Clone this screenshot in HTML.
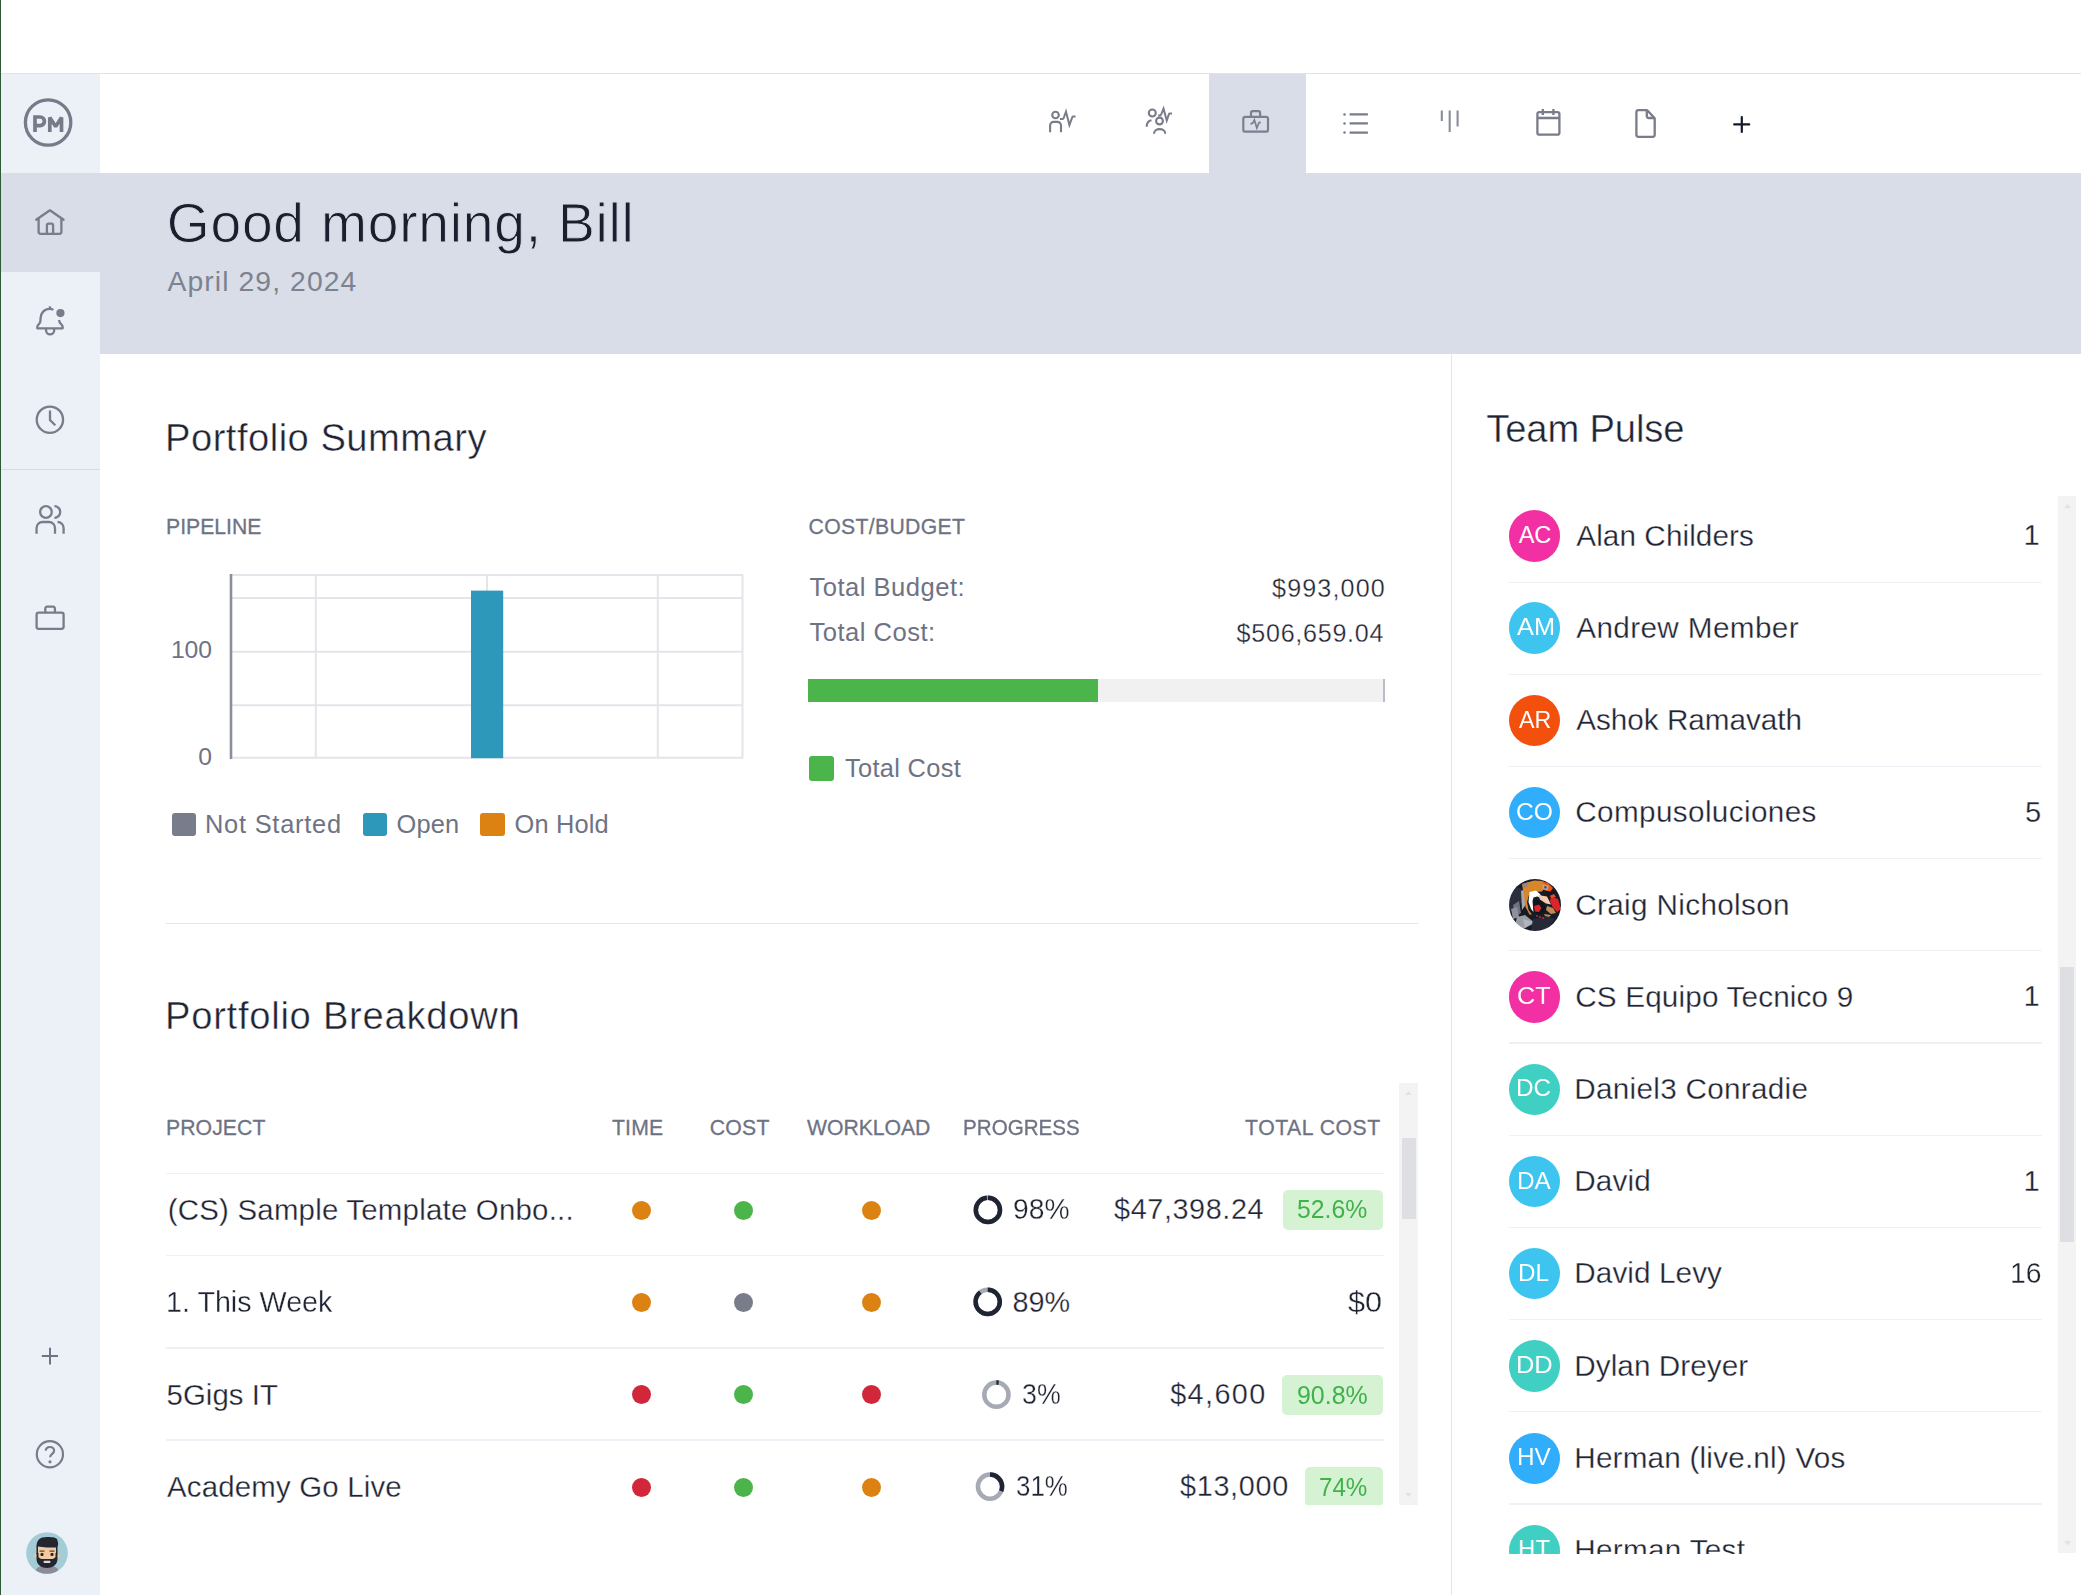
<!DOCTYPE html>
<html>
<head>
<meta charset="utf-8">
<title>Dashboard</title>
<style>
html,body{margin:0;padding:0;}
body{width:2081px;height:1595px;overflow:hidden;background:#fff;position:relative;font-family:"Liberation Sans",sans-serif;color:#1f2433;}
.abs{position:absolute;}
.t{position:absolute;white-space:nowrap;line-height:1;}
svg{position:absolute;overflow:visible;}
.ic{fill:none;stroke:#7a7e8d;stroke-width:2.6;stroke-linecap:round;stroke-linejoin:round;}
.dot{position:absolute;width:19px;height:19px;border-radius:50%;}
.o{background:#dc8213;}.g{background:#4bb54b;}.r{background:#d2263a;}.y{background:#787c8b;}
.badge{position:absolute;background:#d5f2d3;border-radius:5px;}
.av{position:absolute;width:51.4px;height:51.4px;border-radius:50%;}
.hl{position:absolute;height:2px;background:#eef1f6;}
</style>
</head>
<body>
<!-- window chrome -->
<div class="abs" style="left:0;top:72.8px;width:2081px;height:1.2px;background:#e2e3e8;"></div>
<!-- sidebar -->
<div class="abs" style="left:0;top:74px;width:100px;height:1521px;background:#ecf0f7;"></div>
<div class="abs" style="left:0;top:173px;width:100px;height:99px;background:#d8dde8;"></div>
<div class="abs" style="left:0;top:468.9px;width:100px;height:1.2px;background:#d5dae7;"></div>
<div class="abs" style="left:0;top:0;width:1.3px;height:1595px;background:#2f5a38;"></div>
<!-- top nav active tab -->
<div class="abs" style="left:1209px;top:74px;width:97px;height:99px;background:#d8dde8;"></div>
<!-- header band -->
<div class="abs" style="left:100px;top:173px;width:1981px;height:181px;background:#d8dde8;"></div>
<!-- divider between main & team pulse -->
<div class="abs" style="left:1450.8px;top:354px;width:1.4px;height:1241px;background:#e1e6ee;"></div>
<div class="t" id="t_hello" style="left:166.75px;top:196.26px;font-size:55.2px;letter-spacing:0.77px;color:#1a1f2e;-webkit-text-stroke:0.9px #d8dde8;">Good morning, Bill</div>
<div class="t" id="t_date" style="left:167.5px;top:266.79px;font-size:28.3px;letter-spacing:1.09px;color:#7d8290;">April 29, 2024</div>
<div class="t" id="t_ps" style="left:165px;top:418.91px;font-size:38.2px;letter-spacing:0.47px;color:#1f2433;-webkit-text-stroke:0.45px #fff;">Portfolio Summary</div>
<div class="t" id="t_pb" style="left:165px;top:996.91px;font-size:38.2px;letter-spacing:0.72px;color:#1f2433;-webkit-text-stroke:0.45px #fff;">Portfolio Breakdown</div>
<div class="t" id="t_tp" style="left:1486.25px;top:410.16px;font-size:38.2px;letter-spacing:-0.14px;color:#1f2433;-webkit-text-stroke:0.45px #fff;">Team Pulse</div>
<div class="t" id="t_pipe" style="left:166px;top:515.55px;font-size:21.2px;letter-spacing:-0.0px;color:#6e7384;-webkit-text-stroke:0.3px #6e7384;">PIPELINE</div>
<div class="t" id="t_cb" style="left:808.5px;top:515.55px;font-size:21.2px;letter-spacing:0.34px;color:#6e7384;-webkit-text-stroke:0.3px #6e7384;">COST/BUDGET</div>
<div class="t" id="t_100" style="left:171px;top:638.34px;font-size:24.7px;letter-spacing:-0.11px;color:#6e7384;">100</div>
<div class="t" id="t_0" style="left:198.25px;top:744.84px;font-size:24.7px;letter-spacing:0px;color:#6e7384;">0</div>
<div class="t" id="t_ns" style="left:205px;top:811.74px;font-size:25.4px;letter-spacing:0.77px;color:#6e7384;">Not Started</div>
<div class="t" id="t_open" style="left:396.5px;top:811.74px;font-size:25.4px;letter-spacing:0.17px;color:#6e7384;">Open</div>
<div class="t" id="t_oh" style="left:514.5px;top:811.74px;font-size:25.4px;letter-spacing:0.16px;color:#6e7384;">On Hold</div>
<div class="t" id="t_tb" style="left:809.5px;top:575.32px;font-size:25.6px;letter-spacing:0.48px;color:#6e7384;">Total Budget:</div>
<div class="t" id="t_tc" style="left:809.5px;top:620.32px;font-size:25.6px;letter-spacing:0.47px;color:#6e7384;">Total Cost:</div>
<div class="t" id="t_tbv" style="left:1272.1px;top:575.75px;font-size:25.1px;letter-spacing:1.13px;color:#1f2433;-webkit-text-stroke:0.3px #fff;">$993,000</div>
<div class="t" id="t_tcv" style="left:1236.6px;top:620.75px;font-size:25.1px;letter-spacing:0.73px;color:#1f2433;-webkit-text-stroke:0.3px #fff;">$506,659.04</div>
<div class="t" id="t_tcl" style="left:845px;top:755.99px;font-size:25.4px;letter-spacing:0.32px;color:#6e7384;">Total Cost</div>

<svg style="left:0;top:0;" width="2081" height="1595" viewBox="0 0 2081 1595">
 <g stroke="#e3e5ea" stroke-width="2" fill="none">
  <line x1="231" y1="575" x2="743" y2="575"/>
  <line x1="231" y1="598" x2="743" y2="598"/>
  <line x1="231" y1="651.7" x2="743" y2="651.7"/>
  <line x1="231" y1="705.2" x2="743" y2="705.2"/>
  <line x1="231" y1="757.8" x2="743" y2="757.8"/>
  <line x1="315.8" y1="575" x2="315.8" y2="758"/>
  <line x1="487" y1="575" x2="487" y2="758"/>
  <line x1="657.8" y1="575" x2="657.8" y2="758"/>
  <line x1="742.5" y1="575" x2="742.5" y2="758"/>
 </g>
 <rect x="471" y="590.6" width="32.2" height="167.6" fill="#2d98b9"/>
 <line x1="231" y1="574" x2="231" y2="759" stroke="#8a8e9b" stroke-width="2.6"/>
</svg>
<div class="abs" style="left:171.5px;top:812.5px;width:24px;height:23.5px;border-radius:3px;background:#787c8b;"></div>
<div class="abs" style="left:362.8px;top:812.5px;width:24px;height:23.5px;border-radius:3px;background:#2d98b9;"></div>
<div class="abs" style="left:480px;top:812.5px;width:25px;height:23.5px;border-radius:3px;background:#dc8213;"></div>
<div class="abs" style="left:807.5px;top:679.3px;width:577.5px;height:22.7px;background:#f1f1f2;"></div>
<div class="abs" style="left:807.5px;top:679.3px;width:290.5px;height:22.7px;background:#4bb54b;"></div>
<div class="abs" style="left:1383.3px;top:679.3px;width:1.7px;height:22.7px;background:#b9bdc9;"></div>
<div class="abs" style="left:809.2px;top:756px;width:25px;height:24.5px;border-radius:3px;background:#4bb54b;"></div>
<div class="abs" style="left:166px;top:922.7px;width:1252px;height:1.6px;background:#e4e8ee;"></div>
<div class="abs" id="tbl" style="left:160px;top:1082px;width:1239px;height:422.8px;overflow:hidden;">
<div class="abs" style="left:-160px;top:-1082px;width:2081px;height:1595px;">
<div class="abs" style="left:166px;top:1172.8px;width:1217.5px;height:1.4px;background:#edf1f6;"></div>
<div class="abs" style="left:166px;top:1255.0px;width:1217.5px;height:1.4px;background:#edf1f6;"></div>
<div class="abs" style="left:166px;top:1347.4px;width:1217.5px;height:1.4px;background:#edf1f6;"></div>
<div class="abs" style="left:166px;top:1439.4px;width:1217.5px;height:1.4px;background:#edf1f6;"></div>
<div class="dot o" style="left:631.5px;top:1200.8px;"></div><div class="dot g" style="left:734.1px;top:1200.8px;"></div><div class="dot o" style="left:862.2px;top:1200.8px;"></div>
<svg style="left:0;top:0" width="2081" height="1595" viewBox="0 0 2081 1595"><circle cx="987.9" cy="1209.9" r="12.1" fill="none" stroke="#a6aab5" stroke-width="4.5"/><circle cx="987.9" cy="1209.9" r="12.1" fill="none" stroke="#1f2433" stroke-width="4.5" stroke-dasharray="74.51 76.03" transform="rotate(-90 987.9 1209.9)"/></svg>
<div class="badge" style="left:1282.6px;top:1189.6px;width:100.4px;height:40.2px;"></div>
<div class="dot o" style="left:631.5px;top:1292.6px;"></div><div class="dot y" style="left:734.1px;top:1292.6px;"></div><div class="dot o" style="left:862.2px;top:1292.6px;"></div>
<svg style="left:0;top:0" width="2081" height="1595" viewBox="0 0 2081 1595"><circle cx="987.7" cy="1301.8" r="12.1" fill="none" stroke="#a6aab5" stroke-width="4.5"/><circle cx="987.7" cy="1301.8" r="12.1" fill="none" stroke="#1f2433" stroke-width="4.5" stroke-dasharray="67.66 76.03" transform="rotate(-90 987.7 1301.8)"/></svg>
<div class="dot r" style="left:631.5px;top:1384.9px;"></div><div class="dot g" style="left:734.1px;top:1384.9px;"></div><div class="dot r" style="left:862.2px;top:1384.9px;"></div>
<svg style="left:0;top:0" width="2081" height="1595" viewBox="0 0 2081 1595"><circle cx="996.4" cy="1394.7" r="12.1" fill="none" stroke="#a6aab5" stroke-width="4.5"/><circle cx="996.4" cy="1394.7" r="12.1" fill="none" stroke="#1f2433" stroke-width="4.5" stroke-dasharray="2.28 76.03" transform="rotate(-90 996.4 1394.7)"/></svg>
<div class="badge" style="left:1282.2px;top:1374.7px;width:100.6px;height:40.2px;"></div>
<div class="dot r" style="left:631.5px;top:1477.7px;"></div><div class="dot g" style="left:734.1px;top:1477.7px;"></div><div class="dot o" style="left:862.2px;top:1477.7px;"></div>
<svg style="left:0;top:0" width="2081" height="1595" viewBox="0 0 2081 1595"><circle cx="990" cy="1486.6" r="12.1" fill="none" stroke="#a6aab5" stroke-width="4.5"/><circle cx="990" cy="1486.6" r="12.1" fill="none" stroke="#1f2433" stroke-width="4.5" stroke-dasharray="23.57 76.03" transform="rotate(-90 990 1486.6)"/></svg>
<div class="badge" style="left:1305.1px;top:1466.5px;width:77.7px;height:40.2px;"></div>
<div class="t" id="th_p" style="left:166px;top:1116.85px;font-size:21.2px;letter-spacing:0.09px;color:#6e7384;-webkit-text-stroke:0.3px #6e7384;">PROJECT</div>
<div class="t" id="th_t" style="left:612px;top:1116.85px;font-size:21.2px;letter-spacing:0.17px;color:#6e7384;-webkit-text-stroke:0.3px #6e7384;">TIME</div>
<div class="t" id="th_c" style="left:709.75px;top:1116.85px;font-size:21.2px;letter-spacing:0.28px;color:#6e7384;-webkit-text-stroke:0.3px #6e7384;">COST</div>
<div class="t" id="th_w" style="left:807px;top:1116.85px;font-size:21.2px;letter-spacing:-0.04px;color:#6e7384;-webkit-text-stroke:0.3px #6e7384;">WORKLOAD</div>
<div class="t" id="th_g" style="left:963.28px;top:1116.85px;font-size:21.2px;letter-spacing:0px;color:#6e7384;transform:scaleX(0.973);transform-origin:0 0;-webkit-text-stroke:0.3px #6e7384;">PROGRESS</div>
<div class="t" id="th_tc" style="left:1245.1px;top:1116.85px;font-size:21.2px;letter-spacing:0.53px;color:#6e7384;-webkit-text-stroke:0.3px #6e7384;">TOTAL COST</div>
<div class="t" id="r0_n" style="left:167.75px;top:1194.51px;font-size:29.4px;letter-spacing:0.23px;color:#1f2433;-webkit-text-stroke:0.3px #fff;">(CS) Sample Template Onbo...</div>
<div class="t" id="r1_n" style="left:166.05px;top:1287.41px;font-size:29.4px;letter-spacing:0px;color:#1f2433;transform:scaleX(0.9763);transform-origin:0 0;-webkit-text-stroke:0.3px #fff;">1. This Week</div>
<div class="t" id="r2_n" style="left:166.5px;top:1379.61px;font-size:29.4px;letter-spacing:0.06px;color:#1f2433;-webkit-text-stroke:0.3px #fff;">5Gigs IT</div>
<div class="t" id="r3_n" style="left:167px;top:1471.91px;font-size:29.4px;letter-spacing:0.19px;color:#1f2433;-webkit-text-stroke:0.3px #fff;">Academy Go Live</div>
<div class="t" id="r0_p" style="left:1013.27px;top:1194.62px;font-size:28.8px;letter-spacing:0px;color:#1f2433;transform:scaleX(0.9816);transform-origin:0 0;-webkit-text-stroke:0.3px #fff;">98%</div>
<div class="t" id="r1_p" style="left:1012.6px;top:1287.72px;font-size:28.8px;letter-spacing:-0.12px;color:#1f2433;-webkit-text-stroke:0.3px #fff;">89%</div>
<div class="t" id="r2_p" style="left:1022.07px;top:1379.92px;font-size:28.8px;letter-spacing:0px;color:#1f2433;transform:scaleX(0.9296);transform-origin:0 0;-webkit-text-stroke:0.3px #fff;">3%</div>
<div class="t" id="r3_p" style="left:1015.7px;top:1472.02px;font-size:28.8px;letter-spacing:0px;color:#1f2433;transform:scaleX(0.8995);transform-origin:0 0;-webkit-text-stroke:0.3px #fff;">31%</div>
<div class="t" id="r0_c" style="left:1114px;top:1194.62px;font-size:28.8px;letter-spacing:0.61px;color:#1f2433;-webkit-text-stroke:0.3px #fff;">$47,398.24</div>
<div class="t" id="r1_c" style="left:1347.9px;top:1287.72px;font-size:28.8px;letter-spacing:0px;color:#1f2433;transform:scaleX(1.064);transform-origin:0 0;-webkit-text-stroke:0.3px #fff;">$0</div>
<div class="t" id="r2_c" style="left:1170.2px;top:1379.92px;font-size:28.8px;letter-spacing:1.41px;color:#1f2433;-webkit-text-stroke:0.3px #fff;">$4,600</div>
<div class="t" id="r3_c" style="left:1180px;top:1472.02px;font-size:28.8px;letter-spacing:0.69px;color:#1f2433;-webkit-text-stroke:0.3px #fff;">$13,000</div>
<div class="t" id="r0_bt" style="left:1297.23px;top:1197.32px;font-size:25.6px;letter-spacing:0px;color:#3fb24a;transform:scaleX(0.9673);transform-origin:0 0;">52.6%</div>
<div class="t" id="r2_bt" style="left:1296.83px;top:1382.62px;font-size:25.6px;letter-spacing:0px;color:#3fb24a;transform:scaleX(0.9744);transform-origin:0 0;">90.8%</div>
<div class="t" id="r3_bt" style="left:1319.16px;top:1474.72px;font-size:25.6px;letter-spacing:0px;color:#3fb24a;transform:scaleX(0.944);transform-origin:0 0;">74%</div>
</div></div>
<div class="abs" style="left:1399.4px;top:1082.8px;width:18.7px;height:422px;background:#f3f3f3;"></div>
<div class="abs" style="left:1402.2px;top:1138.2px;width:13.7px;height:80.5px;background:#dedfe3;"></div>
<svg style="left:1405.1px;top:1090.8px" width="7" height="4" viewBox="0 0 7 4"><path d="M0 4L3.5 0L7 4Z" fill="#e1e2e6"/></svg>
<svg style="left:1404.9px;top:1492.6px" width="7" height="4" viewBox="0 0 7 4"><path d="M0 0L3.5 4L7 0Z" fill="#e1e2e6"/></svg>
<div class="abs" id="tpl" style="left:1480px;top:496px;width:577px;height:1057.5px;overflow:hidden;">
<div class="abs" style="left:-1480px;top:-496px;width:2081px;height:1595px;">
<div class="av" style="left:1508.9px;top:510.2px;background:#f22fa3;"></div>
<div class="abs" style="left:1509px;top:581.5px;width:532.6px;height:1.4px;background:#edf1f6;"></div>
<div class="av" style="left:1508.9px;top:602.4px;background:#3ec5ef;"></div>
<div class="abs" style="left:1509px;top:673.6px;width:532.6px;height:1.4px;background:#edf1f6;"></div>
<div class="av" style="left:1508.9px;top:694.7px;background:#f2500c;"></div>
<div class="abs" style="left:1509px;top:765.8px;width:532.6px;height:1.4px;background:#edf1f6;"></div>
<div class="av" style="left:1508.9px;top:786.9px;background:#30adfb;"></div>
<div class="abs" style="left:1509px;top:858.0px;width:532.6px;height:1.4px;background:#edf1f6;"></div>
<svg style="left:1508.6px;top:878.6px" width="52" height="52" viewBox="0 0 52 52">
 <defs><clipPath id="cc"><circle cx="26" cy="26" r="26"/></clipPath>
 <filter id="cb" x="-5%" y="-5%" width="110%" height="110%"><feGaussianBlur stdDeviation="0.7"/></filter></defs>
 <g clip-path="url(#cc)"><g filter="url(#cb)">
  <rect x="-2" y="-2" width="56" height="56" fill="#171a28"/>
  <path d="M-2 14L8 8L13 10L12 24L8 30L-2 34Z" fill="#2b2e3c"/>
  <path d="M4 26L10 22L12 34L6 38Z" fill="#6f727e"/>
  <path d="M12 12L16 10L16.500 26L13 31Z" fill="#a4a7b1"/>
  <path d="M2 30L8 28L10 38L4 40Z" fill="#8e919c"/>
  <path d="M8 38L16 36L26 44L12 51L6 46Z" fill="#9a9da7"/>
  <path d="M14 40L24 43L16 49Z" fill="#b3b5bd"/>
  <path d="M24 40L38 37L46 40L38 50L22 52Z" fill="#262937"/>
  <path d="M13 5L25 1.500L34 2L37 7L33 12.500L25 13L20 16L18 23L19.500 31L23 35.500L20.500 35.500L16.500 28L14.500 14Z" fill="#d8862c"/>
  <path d="M13.500 5L20 3L18 8L14 9Z" fill="#8f8a86"/>
  <path d="M32 2L39 4L44 9L41 13L35 11L36 6Z" fill="#f0560f"/>
  <path d="M33.500 5.500L39.500 6.500L39 11L34 10.500Z" fill="#a9abb3"/>
  <path d="M35.500 7L37.500 7.300L37.300 9.500L35.300 9.200Z" fill="#3a3c48"/>
  <path d="M20.500 13L27 11.500L31 15L33 19L28 17.500L24.500 18.500L23.500 22L24.500 33L22 30L19.500 23Z" fill="#ffffff"/>
  <path d="M29 16L38 17.500L42 25.500L37 24.500L31 20.500Z" fill="#f4cdb0"/>
  <path d="M24.500 21L33 23L37 29L36 33L28 35L24.500 31Z" fill="#10121e"/>
  <path d="M25 27L30 25.500L32.500 29L30 33L26 32.500Z" fill="#d9272f"/>
  <path d="M37 12L45 13L47 19L41 19L37 16Z" fill="#131624"/>
  <path d="M42 17.500L49 20L52 30L48 33L43.500 28L41 22Z" fill="#d9272f"/>
  <path d="M40.500 17L45 15L47 18L43 19Z" fill="#e9501c"/>
  <path d="M38 27L44 29L47 34L42 35L37 31Z" fill="#c08a55"/>
  <circle cx="28" cy="37" r="0.900" fill="#d9272f"/><circle cx="31" cy="38" r="0.900" fill="#d9272f"/><circle cx="34" cy="39" r="0.900" fill="#d9272f"/>
  <path d="M35 35L42 36L40 38L36 37Z" fill="#b98a4a"/>
 </g></g>
</svg>

<div class="abs" style="left:1509px;top:950.1px;width:532.6px;height:1.4px;background:#edf1f6;"></div>
<div class="av" style="left:1508.9px;top:971.4px;background:#f22fa3;"></div>
<div class="abs" style="left:1509px;top:1042.3px;width:532.6px;height:1.4px;background:#edf1f6;"></div>
<div class="av" style="left:1508.9px;top:1063.6px;background:#40cfc3;"></div>
<div class="abs" style="left:1509px;top:1134.5px;width:532.6px;height:1.4px;background:#edf1f6;"></div>
<div class="av" style="left:1508.9px;top:1155.9px;background:#3ec5ef;"></div>
<div class="abs" style="left:1509px;top:1226.6px;width:532.6px;height:1.4px;background:#edf1f6;"></div>
<div class="av" style="left:1508.9px;top:1248.1px;background:#3ec5ef;"></div>
<div class="abs" style="left:1509px;top:1318.8px;width:532.6px;height:1.4px;background:#edf1f6;"></div>
<div class="av" style="left:1508.9px;top:1340.4px;background:#40cfc3;"></div>
<div class="abs" style="left:1509px;top:1411.0px;width:532.6px;height:1.4px;background:#edf1f6;"></div>
<div class="av" style="left:1508.9px;top:1432.6px;background:#30adfb;"></div>
<div class="abs" style="left:1509px;top:1503.2px;width:532.6px;height:1.4px;background:#edf1f6;"></div>
<div class="av" style="left:1508.9px;top:1524.8px;background:#40cfc3;"></div>
<div class="abs" style="left:1509px;top:1595.3px;width:532.6px;height:1.4px;background:#edf1f6;"></div>
<div class="t" id="nm0" style="left:1576.25px;top:520.85px;font-size:29.7px;letter-spacing:0.09px;color:#1f2433;-webkit-text-stroke:0.3px #fff;">Alan Childers</div>
<div class="t" id="ct0" style="left:2023.4px;top:521.36px;font-size:29.1px;letter-spacing:0px;color:#1f2433;-webkit-text-stroke:0.3px #fff;">1</div>
<div class="t" id="in0" style="left:1518.75px;top:524.27px;font-size:23.6px;letter-spacing:-0.24px;color:#fff;">AC</div>
<div class="t" id="nm1" style="left:1576.25px;top:613.05px;font-size:29.7px;letter-spacing:0.38px;color:#1f2433;-webkit-text-stroke:0.3px #fff;">Andrew Member</div>
<div class="t" id="in1" style="left:1517.0px;top:616.47px;font-size:23.6px;letter-spacing:0px;color:#fff;transform:scaleX(1.0745);transform-origin:0 0;">AM</div>
<div class="t" id="nm2" style="left:1576.25px;top:705.25px;font-size:29.7px;letter-spacing:-0.02px;color:#1f2433;-webkit-text-stroke:0.3px #fff;">Ashok Ramavath</div>
<div class="t" id="in2" style="left:1519.25px;top:708.67px;font-size:23.6px;letter-spacing:0px;color:#fff;transform:scaleX(0.9847);transform-origin:0 0;">AR</div>
<div class="t" id="nm3" style="left:1575.25px;top:797.45px;font-size:29.7px;letter-spacing:0.37px;color:#1f2433;-webkit-text-stroke:0.3px #fff;">Compusoluciones</div>
<div class="t" id="ct3" style="left:2024.9px;top:797.96px;font-size:29.1px;letter-spacing:0px;color:#1f2433;-webkit-text-stroke:0.3px #fff;">5</div>
<div class="t" id="in3" style="left:1515.96px;top:800.87px;font-size:23.6px;letter-spacing:0px;color:#fff;transform:scaleX(1.0429);transform-origin:0 0;">CO</div>
<div class="t" id="nm4" style="left:1575.25px;top:889.65px;font-size:29.7px;letter-spacing:0.34px;color:#1f2433;-webkit-text-stroke:0.3px #fff;">Craig Nicholson</div>
<div class="t" id="nm5" style="left:1575.25px;top:981.85px;font-size:29.7px;letter-spacing:0.16px;color:#1f2433;-webkit-text-stroke:0.3px #fff;">CS Equipo Tecnico 9</div>
<div class="t" id="ct5" style="left:2023.4px;top:982.36px;font-size:29.1px;letter-spacing:0px;color:#1f2433;-webkit-text-stroke:0.3px #fff;">1</div>
<div class="t" id="in5" style="left:1517.43px;top:985.27px;font-size:23.6px;letter-spacing:0px;color:#fff;transform:scaleX(1.0653);transform-origin:0 0;">CT</div>
<div class="t" id="nm6" style="left:1574.25px;top:1074.05px;font-size:29.7px;letter-spacing:0.29px;color:#1f2433;-webkit-text-stroke:0.3px #fff;">Daniel3 Conradie</div>
<div class="t" id="in6" style="left:1516.47px;top:1077.47px;font-size:23.6px;letter-spacing:0px;color:#fff;transform:scaleX(1.0291);transform-origin:0 0;">DC</div>
<div class="t" id="nm7" style="left:1574.25px;top:1166.25px;font-size:29.7px;letter-spacing:0.14px;color:#1f2433;-webkit-text-stroke:0.3px #fff;">David</div>
<div class="t" id="ct7" style="left:2023.4px;top:1166.76px;font-size:29.1px;letter-spacing:0px;color:#1f2433;-webkit-text-stroke:0.3px #fff;">1</div>
<div class="t" id="in7" style="left:1516.97px;top:1169.67px;font-size:23.6px;letter-spacing:0px;color:#fff;transform:scaleX(1.03);transform-origin:0 0;">DA</div>
<div class="t" id="nm8" style="left:1574.25px;top:1258.45px;font-size:29.7px;letter-spacing:0.09px;color:#1f2433;-webkit-text-stroke:0.3px #fff;">David Levy</div>
<div class="t" id="ct8" style="left:2009.75px;top:1258.96px;font-size:29.1px;letter-spacing:0px;color:#1f2433;transform:scaleX(0.9733);transform-origin:0 0;-webkit-text-stroke:0.3px #fff;">16</div>
<div class="t" id="in8" style="left:1518.47px;top:1261.87px;font-size:23.6px;letter-spacing:0px;color:#fff;transform:scaleX(1.0262);transform-origin:0 0;">DL</div>
<div class="t" id="nm9" style="left:1574.25px;top:1350.65px;font-size:29.7px;letter-spacing:0.06px;color:#1f2433;-webkit-text-stroke:0.3px #fff;">Dylan Dreyer</div>
<div class="t" id="in9" style="left:1516.42px;top:1354.07px;font-size:23.6px;letter-spacing:0px;color:#fff;transform:scaleX(1.0768);transform-origin:0 0;">DD</div>
<div class="t" id="nm10" style="left:1574.25px;top:1442.85px;font-size:29.7px;letter-spacing:0.2px;color:#1f2433;-webkit-text-stroke:0.3px #fff;">Herman (live.nl) Vos</div>
<div class="t" id="in10" style="left:1516.97px;top:1446.27px;font-size:23.6px;letter-spacing:0px;color:#fff;transform:scaleX(1.03);transform-origin:0 0;">HV</div>
<div class="t" id="nm11" style="left:1574.25px;top:1535.05px;font-size:29.7px;letter-spacing:0.3px;color:#1f2433;-webkit-text-stroke:0.3px #fff;">Herman Test</div>
<div class="t" id="in11" style="left:1518px;top:1538.47px;font-size:23.6px;letter-spacing:0.46px;color:#fff;">HT</div>
</div></div>
<div class="abs" style="left:2057.8px;top:496.2px;width:18.5px;height:1057.3px;background:#f3f3f3;"></div>
<div class="abs" style="left:2060.2px;top:966.6px;width:14px;height:275.2px;background:#dedfe3;"></div>
<svg style="left:2063.8px;top:504.4px" width="7.2" height="4.2" viewBox="0 0 7.2 4.2"><path d="M0 4.2L3.6 0L7.2 4.2Z" fill="#e1e2e6"/></svg>
<svg style="left:2063.8px;top:1541px" width="7.2" height="4.2" viewBox="0 0 7.2 4.2"><path d="M0 0L3.6 4.2L7.2 0Z" fill="#e1e2e6"/></svg>
<!-- ICONS -->
<svg style="left:0;top:0" width="2081" height="1595" viewBox="0 0 2081 1595" fill="none" stroke="#787c8b" stroke-width="2.3" stroke-linecap="butt" stroke-linejoin="round">
 <!-- PM logo -->
 <circle cx="48.1" cy="122.5" r="22.7" stroke-width="3.3" stroke="#767a89"/>
 <g stroke="#767a89" stroke-width="3.7" stroke-linejoin="miter" stroke-linecap="butt">
  <path d="M35 132.1V117H40.1a4.3 4.3 0 0 1 0 8.6H35"/>
  <path d="M49.8 132.1V117.6L55.65 126.4L61.5 117.6V132.1" stroke-linejoin="bevel"/>
 </g>
 <!-- home -->
 <g stroke-linecap="round">
  <path d="M36.2 219.7L49.9 210.3L63.6 219.7"/>
  <path d="M38.6 218.3V231.8a2 2 0 0 0 2 2H59.4a2 2 0 0 0 2-2V218.3"/>
  <path d="M46.9 233.8V225.5a1.8 1.8 0 0 1 1.8-1.8H51.3a1.8 1.8 0 0 1 1.8 1.8V233.8"/>
 </g>
 <!-- bell -->
 <path d="M49.9 306.3V308.8"/>
 <path d="M53.4 309.9C52.3 309.2 51.1 308.8 49.9 308.8C44.4 308.8 40.5 313 40.5 318.5V320.3C40.5 322.3 39.8 323.6 38.5 324.7C37.7 325.4 37.3 326 37.3 327V328.3H62.7V327C62.7 326 62.3 325.4 61.5 324.7C60.2 323.6 59.3 322.4 59 320" />
 <path d="M46 328.3V330a4.1 4.4 0 0 0 8.2 0V328.3"/>
 <circle cx="60.4" cy="313.1" r="4.1" fill="#787c8b" stroke="none"/>
 <!-- clock -->
 <circle cx="49.9" cy="419.7" r="13.15"/>
 <path d="M50 410.5V420L55.3 425.2" stroke-linejoin="miter"/>
 <!-- people -->
 <circle cx="45.95" cy="512" r="5.8"/>
 <path d="M54.4 506.2A5.8 5.8 0 0 1 54.4 517.8"/>
 <path d="M36.55 533.8V528A6 6 0 0 1 42.55 522H49A6 6 0 0 1 55 528V533.8"/>
 <path d="M57.6 522A6 6 0 0 1 63.6 528V533.8"/>
 <!-- briefcase -->
 <rect x="36.6" y="612.7" width="27" height="16.1" rx="2"/>
 <path d="M45.3 612.7V608.4a1.7 1.7 0 0 1 1.7-1.7H53.2a1.7 1.7 0 0 1 1.7 1.7V612.7"/>
 <!-- plus -->
 <path d="M41.8 1355.9H58M50 1347.8V1364.4" stroke="#6f7382" stroke-width="2"/>
 <!-- help -->
 <circle cx="49.9" cy="1454.2" r="13.1" stroke-width="2.2"/>
 <path d="M45.7 1450.6C45.9 1448.4 47.8 1447 50 1447C52.4 1447 54.1 1448.7 54.1 1450.8C54.1 1453.9 50.1 1453.8 50.1 1457.2" stroke-width="2.2"/>
 <circle cx="50" cy="1461.8" r="1.6" fill="#787c8b" stroke="none"/>

 <!-- top nav 1: person + pulse -->
 <g stroke-width="2.1">
  <circle cx="1055.5" cy="115" r="3.3"/>
  <path d="M1050.1 132.3V125.4A3.5 3.5 0 0 1 1053.6 121.9H1057.5A3.5 3.5 0 0 1 1061 125.4V132.3"/>
  <path d="M1060 119H1062.6C1063.3 119 1063.5 118.6 1063.7 118L1066 111.6L1069.4 125.1L1072.2 117.4C1072.4 116.8 1072.7 116.6 1073.3 116.6H1075.6" stroke-linejoin="miter" stroke-width="2"/>
 </g>
 <!-- top nav 2: people + pulse -->
 <g stroke-width="2.1">
  <circle cx="1152.3" cy="113" r="3.5"/>
  <path d="M1151.5 120.2C1148.6 120.6 1146.7 123 1146.7 126.8"/>
  <circle cx="1159.5" cy="121" r="3.4"/>
  <path d="M1154.1 133.8V133.4A5.55 4.3 0 0 1 1165.2 133.4V133.8"/>
  <path d="M1158.1 115.4H1160.1C1160.8 115.4 1161 115 1161.2 114.4L1163.55 108.7L1166.75 120.6L1168.9 114.2C1169.1 113.6 1169.4 113.4 1170 113.4H1172" stroke-linejoin="miter" stroke-width="2"/>
 </g>
 <!-- top nav 3: briefcase + pulse (active) -->
 <g stroke-width="2.2" stroke="#7b7f8e">
  <rect x="1243.3" y="116.8" width="24.7" height="14.9" rx="2"/>
  <path d="M1251 116.8V112.9a1.7 1.7 0 0 1 1.7-1.7H1258.4a1.7 1.7 0 0 1 1.7 1.7V116.8"/>
  <path d="M1250.5 124.3L1252.9 122.8L1254.4 120L1256.85 127.9L1259.1 122.5L1260.8 122.3" stroke-width="1.7" stroke-linejoin="miter"/>
 </g>
 <!-- top nav 4: list -->
 <g stroke-width="2.1">
  <path d="M1349.6 114.4H1367.9M1349.6 123.4H1367.9M1349.6 132.6H1367.9"/>
  <circle cx="1344.5" cy="114.4" r="1.25" fill="#787c8b" stroke="none"/>
  <circle cx="1344.5" cy="123.4" r="1.25" fill="#787c8b" stroke="none"/>
  <circle cx="1344.5" cy="132.6" r="1.25" fill="#787c8b" stroke="none"/>
 </g>
 <!-- top nav 5: bars -->
 <path d="M1441.8 110.6V121M1449.7 110.4V132.1M1457.6 110.6V126.6" stroke="#8a8e9b" stroke-width="2.1"/>
 <!-- top nav 6: calendar -->
 <rect x="1537.4" y="112.1" width="22" height="22.6" rx="2"/>
 <path d="M1537.4 118H1559.4M1542.8 108.9V115M1553.4 108.9V115"/>
 <!-- top nav 7: file -->
 <path d="M1647.2 110.2H1638.4a2 2 0 0 0-2 2V134.8a2 2 0 0 0 2 2H1652.7a2 2 0 0 0 2-2V118.2L1647.2 110.2Z"/>
 <path d="M1646.8 110.4V116.3a1.7 1.7 0 0 0 1.7 1.7H1654.5"/>
 <!-- top nav 8: plus -->
 <path d="M1734.2 124.4H1749.2M1741.8 117.1V132" stroke="#141829" stroke-width="2.2" stroke-linecap="round" stroke-dasharray="none"/>
</svg>
<!-- user avatar -->
<svg style="left:25.5px;top:1532px" width="42" height="42" viewBox="0 0 42 42">
 <defs><clipPath id="uc"><circle cx="21" cy="21" r="20.8"/></clipPath></defs>
 <g clip-path="url(#uc)">
  <rect width="42" height="42" fill="#a3ccd6"/>
  <path d="M9 42C9 35 14 33.5 21 33.5S33 35 33 42Z" fill="#8a8d98"/>
  <rect x="11.5" y="14" width="19" height="17" rx="3" fill="#f3c9a2"/>
  <rect x="8.5" y="21" width="4" height="5" rx="2" fill="#f3c9a2"/>
  <rect x="29.5" y="21" width="4" height="5" rx="2" fill="#f3c9a2"/>
  <path d="M10.5 16C10 8 14 5 21 5C27 5 32 5.5 31.5 9C33 12 31.5 14 31.5 16V22H30V15.5C24 15.5 17 15.5 12 14.5V22H10.5Z" fill="#23252f"/>
  <path d="M10.5 21H12.5V25C14 27.5 17 27 21 27S28 27.500 29.500 25V21H31.500V27C31.500 33 26 36 21 36S10.500 33 10.500 27Z" fill="#23252f"/>
  <rect x="17.500" y="28.700" width="7" height="2.200" rx="1" fill="#d9dbe0"/>
  <rect x="14.500" y="21" width="3" height="3" rx="1" fill="#23252f"/>
  <rect x="24.500" y="21" width="3" height="3" rx="1" fill="#23252f"/>
  <rect x="13.500" y="18.500" width="5" height="1.200" fill="#4a4038"/>
  <rect x="23.500" y="18.500" width="5" height="1.200" fill="#4a4038"/>
 </g>
</svg>
</body>
</html>
